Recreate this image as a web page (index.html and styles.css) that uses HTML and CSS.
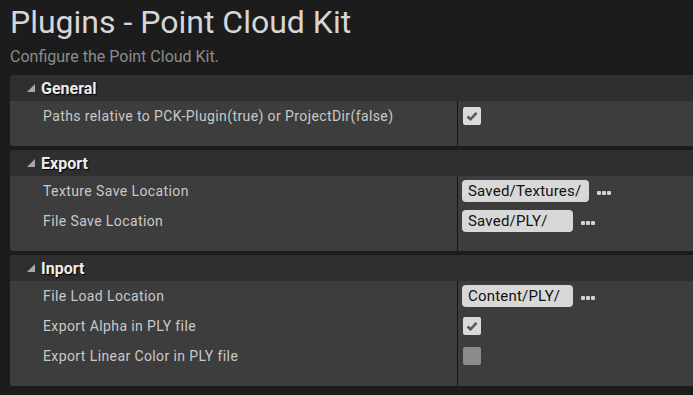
FILE: index.html
```html
<!DOCTYPE html>
<html lang="en">
<head>
    <meta charset="UTF-8">
    <meta name="viewport" content="width=device-width, initial-scale=1.0">
    <title>Plugins - Point Cloud Kit</title>
    <link rel="stylesheet" href="styles.css">
</head>
<body>
    <div class="page">
        <h1 class="title">Plugins - Point Cloud Kit</h1>
        <p class="subtitle">Configure the Point Cloud Kit.</p>

        <div class="panel">
            <div class="section">
                <div class="head">
                    <svg class="arrow" width="8" height="8" viewBox="0 0 8 8"><polygon points="8,0 8,8 0,8" /></svg>
                    <span>General</span>
                </div>
                <div class="body">
                    <div class="row">
                        <div class="name">Paths relative to PCK-Plugin(true) or ProjectDir(false)</div>
                        <div class="value">
                            <span class="check on">
                                <svg width="12" height="10" viewBox="0 0 12 10"><polyline points="1.5,5.5 4.5,8.3 10.5,1.8" /></svg>
                            </span>
                        </div>
                    </div>
                </div>
            </div>

            <div class="section">
                <div class="head">
                    <svg class="arrow" width="8" height="8" viewBox="0 0 8 8"><polygon points="8,0 8,8 0,8" /></svg>
                    <span>Export</span>
                </div>
                <div class="body">
                    <div class="row">
                        <div class="name">Texture Save Location</div>
                        <div class="value">
                            <span class="path">Saved/Textures/</span>
                            <svg class="dots" width="14" height="5" viewBox="0 0 14 5"><rect x="0" y="0" width="4" height="4" rx="1" /><rect x="5" y="0" width="4" height="4" rx="1" /><rect x="10" y="0" width="4" height="4" rx="1" /></svg>
                        </div>
                    </div>
                    <div class="row">
                        <div class="name">File Save Location</div>
                        <div class="value">
                            <span class="path">Saved/PLY/</span>
                            <svg class="dots" width="14" height="5" viewBox="0 0 14 5"><rect x="0" y="0" width="4" height="4" rx="1" /><rect x="5" y="0" width="4" height="4" rx="1" /><rect x="10" y="0" width="4" height="4" rx="1" /></svg>
                        </div>
                    </div>
                </div>
            </div>

            <div class="section">
                <div class="head">
                    <svg class="arrow" width="8" height="8" viewBox="0 0 8 8"><polygon points="8,0 8,8 0,8" /></svg>
                    <span>Inport</span>
                </div>
                <div class="body">
                    <div class="row">
                        <div class="name">File Load Location</div>
                        <div class="value">
                            <span class="path">Content/PLY/</span>
                            <svg class="dots" width="14" height="5" viewBox="0 0 14 5"><rect x="0" y="0" width="4" height="4" rx="1" /><rect x="5" y="0" width="4" height="4" rx="1" /><rect x="10" y="0" width="4" height="4" rx="1" /></svg>
                        </div>
                    </div>
                    <div class="row">
                        <div class="name">Export Alpha in PLY file</div>
                        <div class="value">
                            <span class="check on">
                                <svg width="12" height="10" viewBox="0 0 12 10"><polyline points="1.5,5.5 4.5,8.3 10.5,1.8" /></svg>
                            </span>
                        </div>
                    </div>
                    <div class="row">
                        <div class="name">Export Linear Color in PLY file</div>
                        <div class="value">
                            <span class="check"></span>
                        </div>
                    </div>
                </div>
            </div>
        </div>
    </div>
</body>
</html>
```

FILE: styles.css
```css
body {
    margin: 0;
    background-color: #1c1c1c;
    font-family: Roboto, "Noto Sans", sans-serif;
    color: #c8c8c8;
}
.page {
    padding: 4px 0 0 10px;
}
.title {
    margin: 0;
    font-size: 32px;
    font-weight: normal;
    color: #d6d6d6;
    line-height: 36px;
}
.subtitle {
    margin: 7px 0 0 0;
    font-size: 16px;
    line-height: 20px;
    color: #8c8c8c;
}
.panel {
    margin-top: 8px;
    display: flex;
    flex-direction: column;
    gap: 4px;
}
.head {
    height: 26px;
    display: flex;
    align-items: center;
    background-color: #2f2f2f;
    border-radius: 3px 0 0 0;
    font-size: 16px;
    font-weight: bold;
    color: #ececec;
    text-shadow: 1px 1px 1px #000;
}
.arrow {
    fill: #a8a8a8;
    margin: 0 6px 0 17px;
}
.body {
    background-color: #3d3d3d;
    background-image: linear-gradient(#141414, #141414);
    background-size: 1px 100%;
    background-position: 447px 0;
    background-repeat: no-repeat;
    padding-bottom: 15px;
    border-radius: 0 0 0 3px;
}
.row {
    display: grid;
    grid-template-columns: 448px 1fr;
    height: 30px;
    align-items: center;
}
.name {
    padding-left: 33px;
    font-size: 14px;
    letter-spacing: 0.4px;
    color: #c9c9c9;
}
.value {
    display: flex;
    align-items: center;
    padding-left: 4px;
}
.path {
    display: inline-block;
    min-width: 97px;
    height: 22px;
    line-height: 22px;
    padding: 0 8px 0 6px;
    background-color: #d8d8d8;
    border-radius: 4px;
    color: #111;
    font-size: 15px;
    letter-spacing: 0.2px;
}
.dots {
    fill: #d4d4d4;
    margin: 5px 0 0 8px;
}
.check {
    display: flex;
    align-items: center;
    justify-content: center;
    width: 18px;
    height: 18px;
    margin-left: 1px;
    border-radius: 2px;
    background-color: #8c8c8c;
}
.check.on {
    background-color: #dadada;
}
.check polyline {
    fill: none;
    stroke: #5a5a5a;
    stroke-width: 2.6;
}
```
